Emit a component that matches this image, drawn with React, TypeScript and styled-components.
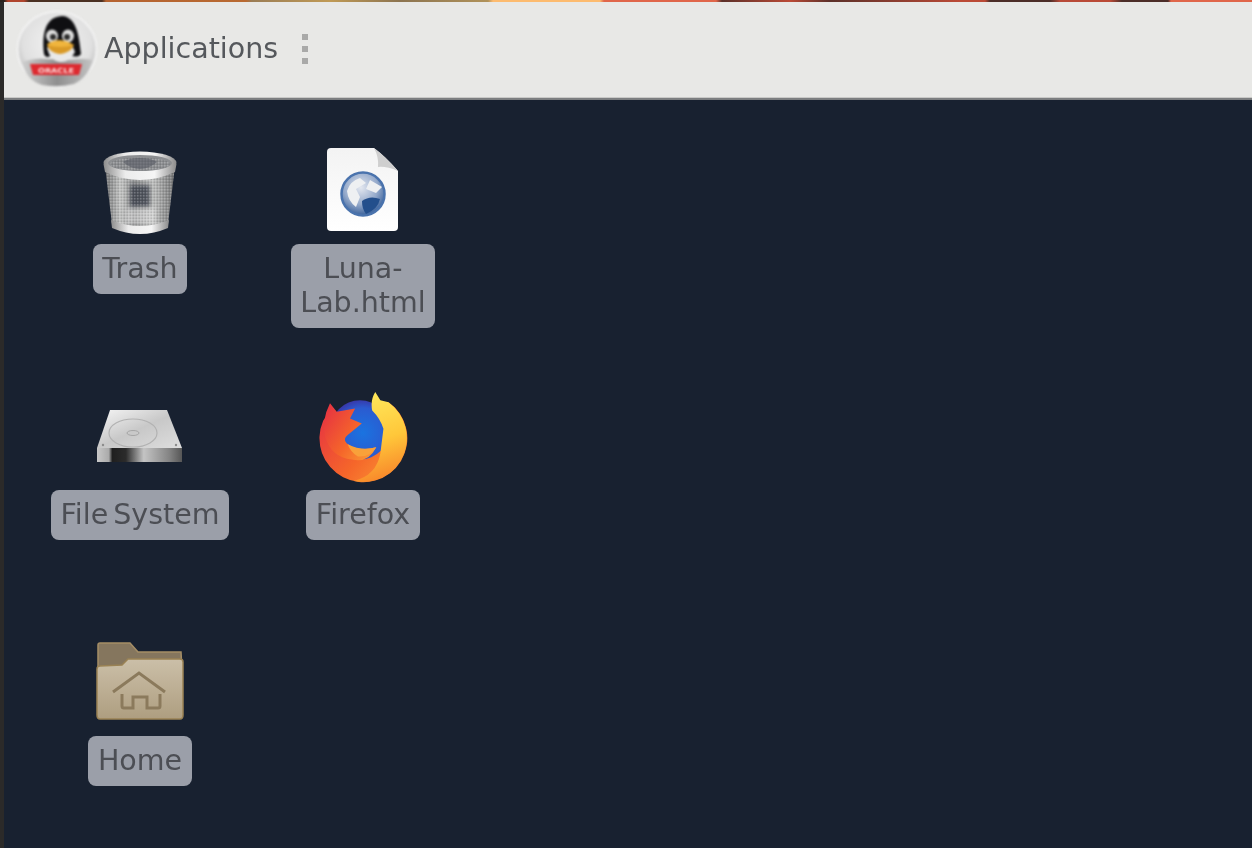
import React from "react";
import styled, { createGlobalStyle } from "styled-components";

const Global = createGlobalStyle`
  html, body { margin: 0; padding: 0; background: #182130; overflow: hidden; }
  #root { width: 1252px; height: 848px; }
`;

const Screen = styled.div`
  width: 1252px;
  height: 848px;
  display: flex;
  flex-direction: column;
  background: #182130;
  overflow: hidden;
  font-family: "DejaVu Sans", sans-serif;
`;

const Wallpaper = styled.div`
  height: 2px;
  flex: none;
  background: linear-gradient(90deg, #2a211c 0, #2a211c 4px, #b0452d 8px, #b0452d 24px, #4a3022 29px, #4a3022 102px, #b5622f 106px, #b96a32 246px, #9b7d55 252px, #c09a55 330px, #8c7450 400px, #b0925a 488px, #fdbb6f 493px, #fdbb6f 600px, #e0664a 604px, #e0664a 716px, #5c3029 722px, #bb4a36 790px, #5c3029 830px, #bb4a36 960px, #bb4a36 985px, #4c2d28 990px, #4c2d28 1050px, #b84a38 1060px, #bb4a36 1110px, #4c2d28 1122px, #4c2d28 1168px, #e0664a 1171px, #e0664a 100%);
`;

const Body = styled.div`
  flex: 1;
  display: flex;
  min-height: 0;
`;

const LeftEdge = styled.div`
  width: 4px;
  flex: none;
  background: #2b2a29;
`;

const Main = styled.div`
  flex: 1;
  display: flex;
  flex-direction: column;
  min-width: 0;
`;

const Panel = styled.header`
  height: 98px;
  flex: none;
  display: flex;
  align-items: center;
  padding: 0 0 3px 12px;
  box-sizing: border-box;
  background: #e8e8e6;
  border-bottom: 2px solid #7c7e80;
  box-shadow: inset 0 -1px 0 #c9c9c7;
`;

const MenuLogo = styled.svg`
  width: 82px;
  height: 82px;
  flex: none;
  filter: blur(0.8px);
`;

const MenuLabel = styled.span`
  margin-left: 6px;
  font-size: 28.5px;
  color: #55585c;
  filter: blur(0.7px);
`;

const Grip = styled.div`
  margin-left: 24px;
  display: flex;
  flex-direction: column;
  gap: 6px;
  filter: blur(0.6px);
`;

const GripDot = styled.span`
  width: 6px;
  height: 6px;
  background: #a9a9a8;
`;

const Desktop = styled.main`
  flex: 1;
  display: grid;
  grid-template-columns: 223px 223px;
  grid-auto-rows: 246px;
  justify-content: start;
  padding: 50px 0 0 24.5px;
  box-sizing: border-box;
`;

const Launcher = styled.div`
  display: flex;
  flex-direction: column;
  align-items: center;
`;

const IconSlot = styled.div<{ $gap: number }>`
  width: 96px;
  height: 94px;
  flex: none;
  box-sizing: border-box;
  padding-bottom: ${(p) => p.$gap}px;
  display: flex;
  align-items: flex-end;
  justify-content: center;
  filter: blur(0.7px);
`;

const Caption = styled.div`
  box-sizing: border-box;
  padding: 8px 9.5px;
  border-radius: 8px;
  background: #9b9fa9;
  color: #4c4e54;
  font-size: 28.5px;
  line-height: 34px;
  word-spacing: -4px;
  text-align: center;
  white-space: pre;
`;

const CaptionText = styled.span`
  display: block;
  filter: blur(0.7px);
`;

const BannerText = styled.text`
  font-family: "DejaVu Sans", sans-serif;
  font-size: 7px;
  font-weight: 700;
  fill: #fbdcdc;
`;

const TuxLogo = () => (
  <MenuLogo viewBox="0 0 82 82">
    <defs>
      <radialGradient id="disc" cx="50%" cy="42%" r="58%">
        <stop offset="0" stopColor="#f4f4f4" />
        <stop offset="0.75" stopColor="#e0e0e0" />
        <stop offset="1" stopColor="#bdbdbd" />
      </radialGradient>
      <linearGradient id="shell" x1="0" x2="1" y1="0" y2="0">
        <stop offset="0" stopColor="#cfcfcf" />
        <stop offset="0.5" stopColor="#8f8f8f" />
        <stop offset="1" stopColor="#c2c2c2" />
      </linearGradient>
    </defs>
    <ellipse cx="41" cy="41" rx="39.5" ry="37.5" fill="url(#disc)" stroke="#f2f2f2" strokeWidth="2" />
    <path d="M6 54 Q20 50 28 51 L54 52 Q68 50 76 52 Q74 68 58 76 Q42 80 26 77 Q10 72 6 54Z" fill="url(#shell)" />
    <path d="M28 46 C26 28 28 9 46 8 C60 9 63 26 65 46 C62 50 58 48 54 48 L34 48 C32 50 29 49 28 46Z" fill="#0f0f12" />
    <path d="M31 40 Q36 33 46 33 Q56 33 59 44 Q54 54 44 54 Q34 53 31 40Z" fill="#e9e9e9" />
    <ellipse cx="36" cy="28" rx="6" ry="6.5" fill="#dedede" />
    <ellipse cx="52" cy="28" rx="6" ry="6.5" fill="#dedede" />
    <circle cx="37" cy="29" r="3" fill="#2a2a2a" />
    <circle cx="51" cy="29" r="3" fill="#2a2a2a" />
    <path d="M31 36 Q38 32 44 32 Q52 33 58 37 Q54 45 44 46 Q34 45 31 36Z" fill="#f0b53d" />
    <path d="M31 37 Q44 41 58 37 Q54 45 44 46 Q34 45 31 37Z" fill="#d99a28" />
    <path d="M14 56 L66 56 L63 67 L17 67Z" fill="#dd2a30" />
    <BannerText x="40" y="64.5" textAnchor="middle" textLength="36" lengthAdjust="spacingAndGlyphs">ORACLE</BannerText>
  </MenuLogo>
);

const TrashIcon = () => (
  <svg width="78" height="90" viewBox="0 0 78 90">
    <defs>
      <linearGradient id="can" x1="0" x2="1" y1="0" y2="0">
        <stop offset="0" stopColor="#707172" />
        <stop offset="0.22" stopColor="#c4c5c4" />
        <stop offset="0.42" stopColor="#8f9091" />
        <stop offset="0.68" stopColor="#c0c1c0" />
        <stop offset="1" stopColor="#717273" />
      </linearGradient>
      <linearGradient id="rim" x1="0" x2="1" y1="0" y2="0">
        <stop offset="0" stopColor="#8d8d8d" />
        <stop offset="0.3" stopColor="#ececec" />
        <stop offset="0.7" stopColor="#f5f5f5" />
        <stop offset="1" stopColor="#8b8b8b" />
      </linearGradient>
      <pattern id="mesh" width="3" height="3" patternUnits="userSpaceOnUse">
        <rect width="1.5" height="1.5" fill="#ffffff" opacity="0.22" />
        <rect x="1.5" y="1.5" width="1.5" height="1.5" fill="#000000" opacity="0.12" />
      </pattern>
      <filter id="soft" x="-30%" y="-30%" width="160%" height="160%">
        <feGaussianBlur stdDeviation="2" />
      </filter>
    </defs>
    <path d="M4 16 L11 74 Q39 88 67 74 L74 16Z" fill="url(#can)" />
    <rect x="29" y="35" width="20" height="22" fill="#3a3f4c" opacity="0.8" filter="url(#soft)" />
    <rect x="25" y="58" width="30" height="16" fill="#e6e6e6" opacity="0.5" filter="url(#soft)" />
    <path d="M4 16 L11 74 Q39 88 67 74 L74 16Z" fill="url(#mesh)" />
    <path d="M10 70 Q39 82 68 70 L67 78 Q39 90 11 78Z" fill="url(#rim)" />
    <ellipse cx="39" cy="13" rx="36.5" ry="11.5" fill="url(#rim)" />
    <ellipse cx="39" cy="13" rx="32" ry="8" fill="#8c8e91" />
    <ellipse cx="39" cy="14" rx="30" ry="6.5" fill="url(#mesh)" />
    <path d="M39 8 Q50 8 56 12 Q48 19 39 19 Q30 19 22 12 Q28 8 39 8Z" fill="#555963" opacity="0.6" />
    <path d="M2.5 14 Q39 32 75.5 14 L74 22 Q39 38 4 22Z" fill="url(#rim)" />
  </svg>
);

const PageIcon = () => (
  <svg width="74" height="86" viewBox="0 0 74 86">
    <defs>
      <linearGradient id="pg" x1="0" x2="0" y1="0" y2="1">
        <stop offset="0" stopColor="#f3f3f3" />
        <stop offset="1" stopColor="#ffffff" />
      </linearGradient>
      <radialGradient id="globe" cx="45%" cy="35%" r="65%">
        <stop offset="0" stopColor="#e3e7ef" />
        <stop offset="0.6" stopColor="#95aacb" />
        <stop offset="1" stopColor="#3b629b" />
      </radialGradient>
    </defs>
    <path d="M1 5 Q1 1 5 1 L48 1 Q60 10 72 24 L72 80 Q72 84 68 84 L5 84 Q1 84 1 80Z" fill="url(#pg)" />
    <path d="M48 1 Q60 10 72 24 Q60 19 52 20 Q53 10 48 1Z" fill="#cfcfcf" />
    <circle cx="37" cy="47" r="21.5" fill="url(#globe)" stroke="#4a73ad" strokeWidth="2.5" />
    <path d="M21 44 Q24 34 34 31 L40 36 L30 42 L34 50 L30 60 Q22 54 21 44Z" fill="#eef0f2" />
    <path d="M44 33 L56 40 L50 46 L40 42Z" fill="#eef0f2" />
    <path d="M36 54 Q44 48 54 52 Q52 62 40 67 Q36 62 36 54Z" fill="#234f8c" />
  </svg>
);

const DriveIcon = () => (
  <svg width="90" height="56" viewBox="0 0 90 56">
    <defs>
      <linearGradient id="top" x1="0" x2="1" y1="0" y2="1">
        <stop offset="0" stopColor="#f6f6f6" />
        <stop offset="0.5" stopColor="#c8c8c8" />
        <stop offset="1" stopColor="#dedede" />
      </linearGradient>
      <linearGradient id="side" x1="0" x2="1" y1="0" y2="0">
        <stop offset="0" stopColor="#c8c8c8" />
        <stop offset="0.14" stopColor="#aaa" />
        <stop offset="0.18" stopColor="#1f1f1f" />
        <stop offset="0.34" stopColor="#2b2b2b" />
        <stop offset="0.55" stopColor="#c4c4c4" />
        <stop offset="0.85" stopColor="#848484" />
        <stop offset="1" stopColor="#565656" />
      </linearGradient>
    </defs>
    <path d="M15 0 L72 0 L87 38 L2 38Z" fill="url(#top)" />
    <rect x="2" y="38" width="85" height="14" fill="url(#side)" />
    <ellipse cx="38" cy="23" rx="24" ry="14" fill="none" stroke="#b2b2b2" strokeWidth="1.2" />
    <ellipse cx="38" cy="23" rx="6" ry="2.5" fill="none" stroke="#a5a5a5" strokeWidth="1" />
    <circle cx="8" cy="35" r="1.2" fill="#8c8c8c" />
    <circle cx="81" cy="35" r="1.2" fill="#8c8c8c" />
  </svg>
);

const FoxIcon = () => (
  <svg width="92" height="94" viewBox="0 0 90 92">
    <defs>
      <linearGradient id="fox" x1="0" x2="1" y1="0.25" y2="1">
        <stop offset="0" stopColor="#e8383f" />
        <stop offset="0.5" stopColor="#f5662a" />
        <stop offset="1" stopColor="#fca136" />
      </linearGradient>
      <linearGradient id="tail" x1="0.3" x2="0.5" y1="0" y2="1">
        <stop offset="0" stopColor="#ffe95c" />
        <stop offset="0.55" stopColor="#ffc73a" />
        <stop offset="1" stopColor="#f8862a" />
      </linearGradient>
      <radialGradient id="ball" cx="55%" cy="55%" r="60%">
        <stop offset="0" stopColor="#1a73e0" />
        <stop offset="0.7" stopColor="#2b5bd0" />
        <stop offset="1" stopColor="#3b2f9f" />
      </radialGradient>
    </defs>
    <path d="M6 30 L13 20 L30 30 L60 30 L70 12 A43 43 0 1 1 6 30Z" fill="url(#fox)" />
    <circle cx="42" cy="39" r="29" fill="url(#ball)" />
    <path d="M12.7 13 L19.3 21.2 L37.3 18 L32.3 27.8 L43.8 32.7 L30 44 Q25 48 29 52 Q40 61 58 56 Q50 72 34 68 Q14 66 8 46 Q4 30 12.7 13Z" fill="url(#fox)" />
    <path d="M57 2 L62 10 L70 12 A43 43 0 0 1 36 89 Q58 84 62 62 L65 38 Q62 28 54 20 Q52 10 57 2Z" fill="url(#tail)" />
    <path d="M30 53 Q44 60 58 56 Q52 66 40 65 Q33 61 30 53Z" fill="#f9a13a" />
  </svg>
);

const FolderIcon = () => (
  <svg width="90" height="82" viewBox="0 0 90 82">
    <defs>
      <linearGradient id="fd" x1="0" x2="0" y1="0" y2="1">
        <stop offset="0" stopColor="#cbbfa8" />
        <stop offset="1" stopColor="#ae9e80" />
      </linearGradient>
    </defs>
    <path d="M3 5 Q3 3 5 3 L35 3 L43 12 L86 12 L87 30 L3 30Z" fill="#85765e" stroke="#a58e66" strokeWidth="1.5" />
    <path d="M2 29 Q2 26 5 26 L27 25 L33 19 L85 19 Q88 19 88 22 L88 75 Q88 79 85 79 L5 79 Q2 79 2 75Z" fill="url(#fd)" stroke="#9a8254" strokeWidth="1.5" />
    <path d="M18 52 L44 33 L70 52" fill="none" stroke="#8b7a5c" strokeWidth="3" />
    <path d="M27 54 L27 66 Q27 68 29 68 L38 68 L38 57 L52 57 L52 68 L63 68 Q65 68 65 66 L65 54" fill="none" stroke="#8b7a5c" strokeWidth="3" />
  </svg>
);

const items = [
  { id: "trash", icon: <TrashIcon />, label: "Trash", gap: 4 },
  { id: "page", icon: <PageIcon />, label: "Luna-\nLab.html", gap: 11 },
  { id: "drive", icon: <DriveIcon />, label: "File System", gap: 24 },
  { id: "fox", icon: <FoxIcon />, label: "Firefox", gap: 6 },
  { id: "home", icon: <FolderIcon />, label: "Home", gap: 14 },
];

export default function App() {
  return (
    <Screen>
      <Global />
      <Wallpaper />
      <Body>
        <LeftEdge />
        <Main>
          <Panel>
            <TuxLogo />
            <MenuLabel>Applications</MenuLabel>
            <Grip>
              <GripDot />
              <GripDot />
              <GripDot />
            </Grip>
          </Panel>
          <Desktop>
            {items.map((it) => (
              <Launcher key={it.id}>
                <IconSlot $gap={it.gap}>{it.icon}</IconSlot>
                <Caption>
                  <CaptionText>{it.label}</CaptionText>
                </Caption>
              </Launcher>
            ))}
          </Desktop>
        </Main>
      </Body>
    </Screen>
  );
}
